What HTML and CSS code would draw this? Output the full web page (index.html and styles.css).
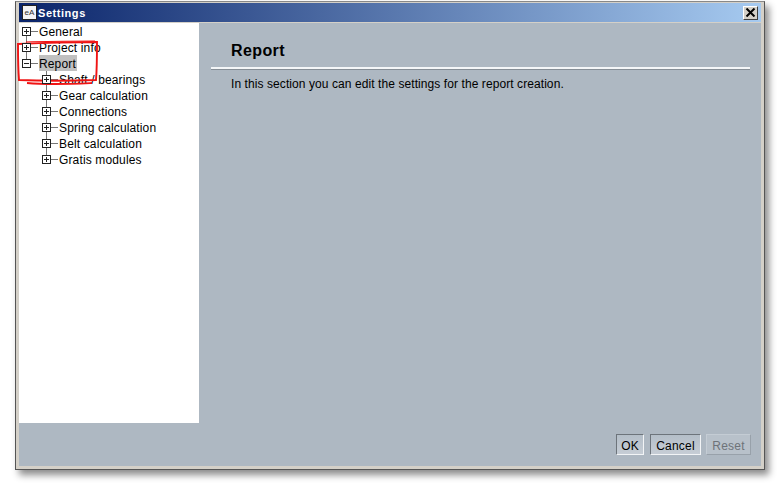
FILE: index.html
```html
<!DOCTYPE html>
<html lang="en">
<head>
    <meta charset="UTF-8">
    <title>Settings</title>
    <link rel="stylesheet" href="styles.css">
</head>
<body>
    <div class="window">
        <div class="titlebar">
            <span class="appicon">eA</span>
            <span class="title">Settings</span>
            <span class="closebtn">
                <svg width="11" height="9" viewBox="0 0 11 9"><path d="M1.5 0.5L9.5 8.5M9.5 0.5L1.5 8.5" stroke="#000" stroke-width="2" fill="none"/></svg>
            </span>
        </div>
        <div class="main">
            <div class="tree">
                <div class="stem stem-root"></div>
                <div class="stem stem-child"></div>
                <div class="row"><span class="box plus"></span><span class="dash"></span><span class="label">General</span></div>
                <div class="row"><span class="box plus"></span><span class="dash"></span><span class="label">Project info</span></div>
                <div class="row"><span class="box"></span><span class="dash"></span><span class="label selected">Report</span></div>
                <div class="row child"><span class="box plus"></span><span class="dash"></span><span class="label">Shaft / bearings</span></div>
                <div class="row child"><span class="box plus"></span><span class="dash"></span><span class="label">Gear calculation</span></div>
                <div class="row child"><span class="box plus"></span><span class="dash"></span><span class="label">Connections</span></div>
                <div class="row child"><span class="box plus"></span><span class="dash"></span><span class="label">Spring calculation</span></div>
                <div class="row child"><span class="box plus"></span><span class="dash"></span><span class="label">Belt calculation</span></div>
                <div class="row child"><span class="box plus"></span><span class="dash"></span><span class="label">Gratis modules</span></div>
            </div>
            <div class="panel">
                <h2>Report</h2>
                <div class="rule"></div>
                <p>In this section you can edit the settings for the report creation.</p>
            </div>
        </div>
        <div class="buttons">
            <button class="btn-ok">OK</button>
            <button class="btn-cancel">Cancel</button>
            <button class="btn-reset disabled">Reset</button>
        </div>
    </div>

    <!-- red marker scribble on top of the screenshot -->
    <svg class="scribble" width="780" height="485" viewBox="0 0 780 485">
        <path d="M18 44C40 43 70 42 97 42C97 55 97 68 96 80C70 81 40 81 19 80C18 68 18 55 18 44Z" fill="none" stroke="#f01414" stroke-width="1.9"/>
        <path d="M27 83C50 85 70 84 92 83" fill="none" stroke="#f01414" stroke-width="1.9"/>
        <path d="M26 42C50 41 75 41 95 41" fill="none" stroke="#f01414" stroke-width="1.2"/>
    </svg>
</body>
</html>
```

FILE: styles.css
```css
body {
    margin: 0;
    width: 780px;
    height: 485px;
    overflow: hidden;
    background: #fff;
    font-family: "Liberation Sans", Arial, sans-serif;
    font-size: 12px;
    color: #000;
}
.window {
    box-sizing: border-box;
    width: 750px;
    height: 469px;
    margin: 1px 0 0 15px;
    padding: 1px 3px 3px 3px;
    display: flex;
    flex-direction: column;
    background: #d4d0c8;
    border: 1px solid #555;
    border-top-color: #888;
    box-shadow: 4px 5px 7px rgba(0, 0, 0, 0.45);
}
.titlebar {
    flex: none;
    height: 19px;
    margin-bottom: 1px;
    display: flex;
    align-items: center;
    padding: 0 3px;
    background: linear-gradient(to right, #0a246a, #a6caf0);
    color: white;
}
.appicon {
    box-sizing: border-box;
    width: 15px;
    height: 15px;
    margin-right: 1px;
    border: 1px solid #222;
    background: #f4f4f4;
    color: #333;
    font-size: 8px;
    line-height: 13px;
    text-align: center;
}
.title {
    flex: 1;
    font-size: 11px;
    font-weight: bold;
    letter-spacing: 0.55px;
}
.closebtn {
    box-sizing: border-box;
    width: 15px;
    height: 14px;
    display: flex;
    align-items: center;
    justify-content: center;
    background: #d4d0c8;
    border: 1px solid;
    border-color: #fff #404040 #404040 #fff;
}
.main {
    flex: 1;
    display: flex;
    background: #aeb8c2;
}
.tree {
    position: relative;
    box-sizing: border-box;
    width: 180px;
    height: 400px;
    background: #fff;
}
.row {
    height: 16px;
    display: flex;
    align-items: center;
    padding-left: 3px;
    letter-spacing: 0.14px;
}
.row.child {
    padding-left: 23px;
}
.box {
    position: relative;
    box-sizing: border-box;
    flex: none;
    width: 9px;
    height: 9px;
    border: 1px solid #222;
    background: #fff;
    z-index: 1;
}
.box::before {
    content: "";
    position: absolute;
    left: 1px;
    top: 3px;
    width: 5px;
    height: 1px;
    background: #222;
}
.box.plus::after {
    content: "";
    position: absolute;
    left: 3px;
    top: 1px;
    width: 1px;
    height: 5px;
    background: #222;
}
.dash {
    flex: none;
    width: 7px;
    height: 1px;
    margin-right: 1px;
    background: #777;
}
.label {
    height: 16px;
    padding-right: 1px;
    line-height: 18px;
}
.label.selected {
    background: #c0c0c0;
}
.stem {
    position: absolute;
    width: 1px;
    background: #777;
}
.stem-root {
    left: 7px;
    top: 9px;
    height: 32px;
}
.stem-child {
    left: 27px;
    top: 48px;
    height: 85px;
}
.panel {
    flex: 1;
    padding: 0 11px 0 12px;
}
.panel h2 {
    margin: 0 0 0 20px;
    padding-top: 18px;
    height: 26px;
    font-size: 16px;
    line-height: 20px;
    font-weight: bold;
    letter-spacing: 0.4px;
}
.rule {
    height: 2px;
    background: #f4f6f8;
    border-bottom: 1px solid #868e96;
}
.panel p {
    margin: 6px 0 0 20px;
    line-height: 16px;
    letter-spacing: 0.08px;
}
.buttons {
    flex: none;
    height: 43px;
    display: flex;
    justify-content: flex-end;
    align-items: flex-start;
    gap: 6px;
    padding: 11px 10px 0 0;
    box-sizing: border-box;
    background: #aeb8c2;
}
.buttons button {
    box-sizing: border-box;
    height: 21px;
    padding: 2px 0 0;
    font-family: inherit;
    font-size: 12px;
    letter-spacing: 0.2px;
    background: linear-gradient(to bottom, #b4bec8, #c6cdd5);
    border: 1px solid;
    border-color: #6d747b #f2f4f6 #f2f4f6 #6d747b;
    color: #000;
}
.btn-ok {
    width: 28px;
}
.btn-cancel {
    width: 51px;
}
.btn-reset {
    width: 45px;
    margin-left: -1px;
}
.buttons button.disabled {
    color: #6e7379;
    background: #b8c1ca;
    border-color: #c4ccd4 #98a1aa #98a1aa #c4ccd4;
}
.scribble {
    position: absolute;
    left: 0;
    top: 0;
}
```
